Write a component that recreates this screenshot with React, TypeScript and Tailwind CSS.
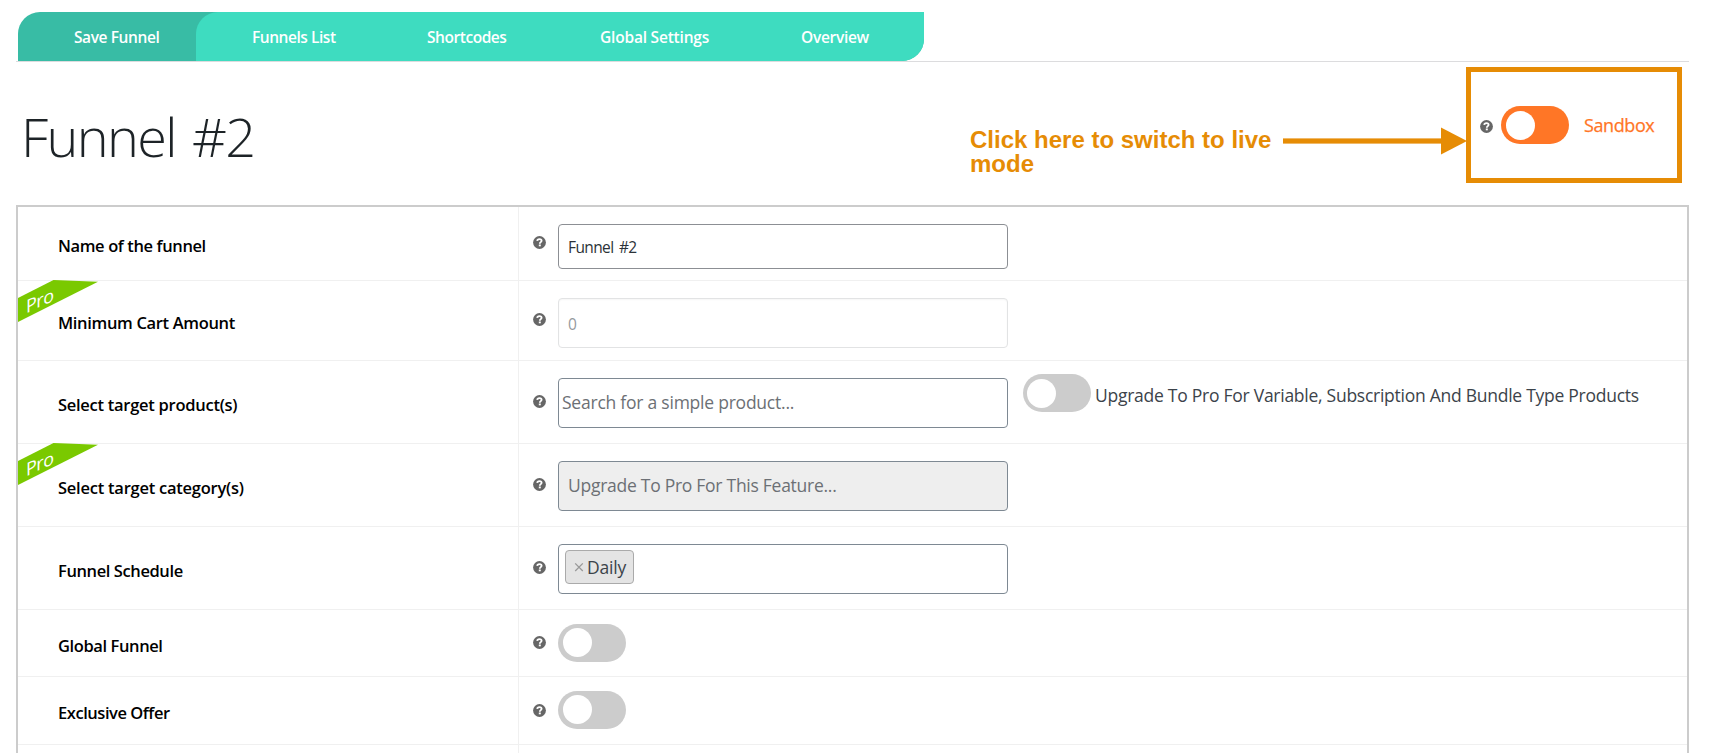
import type { ReactNode } from "react";

function Help({ className }: { className: string }) {
  return (
    <svg viewBox="0 0 13 13" className={`block h-[13px] w-[13px] shrink-0 ${className}`}>
      <circle cx="6.5" cy="6.5" r="6.4" fill="#666" />
      <path
        d="M4.2 4.9C4.3 3.6 5.3 3.1 6.5 3.1S8.6 3.7 8.6 4.8C8.6 6.1 6.8 6.1 6.8 7.7"
        fill="none"
        stroke="#fff"
        strokeWidth="1.8"
      />
      <rect x="5.8" y="8.5" width="2" height="1.8" fill="#fff" />
    </svg>
  );
}

function Toggle({ className, knob }: { className: string; knob: string }) {
  return (
    <div className={`flex h-[38px] w-[68px] shrink-0 rounded-full ${className}`}>
      <div className={`h-[29px] w-[29px] rounded-full bg-white ${knob}`} />
    </div>
  );
}

function Ribbon() {
  return (
    <div className="absolute -top-px left-0 h-[44px] w-[82px]">
      <svg viewBox="0 0 82 44" className="block h-[44px] w-[82px]">
        <polygon points="0,18 35.5,0 80,1.7 0,42" fill="#7ac900" />
      </svg>
      <span className="absolute top-[8px] left-[8px] skew-y-[-25deg] text-[18px] leading-[24px] tracking-[-0.5px] text-white">
        Pro
      </span>
    </div>
  );
}

type RowProps = {
  label: string;
  labelClass: string;
  height: string;
  helpClass: string;
  pro?: boolean;
  children?: ReactNode;
};

function Row({ label, labelClass, height, helpClass, pro, children }: RowProps) {
  return (
    <div className={`relative flex shrink-0 border-b border-[#f0f0f0] ${height}`}>
      {pro && <Ribbon />}
      <div className="w-[501px] shrink-0 border-r border-[#f0f0f0] pl-[40px]">
        <div className={`text-[16.5px] leading-[24px] font-semibold whitespace-nowrap text-black ${labelClass}`}>{label}</div>
      </div>
      <div className="flex flex-1 items-start pl-[14px]">
        <Help className={helpClass} />
        {children}
      </div>
    </div>
  );
}

const field = "ml-[12px] w-[450px] shrink-0 rounded-[4px] border whitespace-nowrap";

export default function App() {
  return (
    <div className="relative h-[753px] w-[1712px] overflow-hidden bg-white pt-[12px] pr-[23px] pl-[16px] font-['Open_Sans',sans-serif]">
      <div className="h-[50px] border-b border-[#dcdcde] pl-[2px]">
        <nav className="flex h-[49px] w-[906px] overflow-hidden rounded-tl-[22px] rounded-br-[22px] bg-[#38bca5] text-[15.5px] leading-[51px] font-semibold whitespace-nowrap text-white">
          <a className="w-[178px] pl-[56px] tracking-[-0.4px]">Save Funnel</a>
          <div className="flex flex-1 rounded-tl-[22px] bg-[#3edcc0]">
            <a className="w-[176px] pl-[56px] tracking-[-0.45px]">Funnels List</a>
            <a className="w-[173px] pl-[55px] tracking-[-0.45px]">Shortcodes</a>
            <a className="w-[200px] pl-[55px] tracking-[-0.2px]">Global Settings</a>
            <a className="pl-[56px] tracking-[-0.3px]">Overview</a>
          </div>
        </nav>
      </div>

      <header className="flex h-[143px] items-start">
        <h1 className="w-[954px] pt-[40px] pl-[5px] text-[54px] leading-[68px] font-light tracking-[-1.65px] [word-spacing:4px] text-[#1d2327]">
          Funnel #2
        </h1>
        <p className="w-[313px] pt-[66px] font-['Liberation_Sans',sans-serif] text-[24px] leading-[24px] font-bold text-[#e68c05]">
          Click here to switch to live
          <br />
          mode
        </p>
        <svg viewBox="0 0 184 28" className="mt-[65px] -mr-[2px] block h-[28px] w-[184px] shrink-0">
          <rect x="0" y="11.4" width="159" height="5.2" fill="#e68c05" />
          <polygon points="158,0.5 184,14 158,27.5" fill="#e68c05" />
        </svg>
        <div className="mt-[5px] ml-px flex h-[116px] w-[216px] shrink-0 items-start border-[5px] border-[#e68c05]">
          <Help className="mt-[48px] ml-[9px]" />
          <Toggle className="mt-[34px] ml-[8px] bg-[#ff7626]" knob="mt-[5px] ml-[5px]" />
          <span className="mt-[40px] ml-[15px] text-[18px] leading-[26px] font-medium tracking-[-0.4px] text-[#ff7626] [-webkit-text-stroke:0.25px_#ff7626]">
            Sandbox
          </span>
        </div>
      </header>

      <main className="flex h-[560px] flex-col border-2 border-[#ccc]">
        <Row label="Name of the funnel" labelClass="mt-[27px] tracking-[-0.38px]" height="h-[74px]" helpClass="mt-[29px]">
          <div className={`${field} mt-[17px] h-[45px] border-[#8c8f94] pl-[9px] text-[15.5px] leading-[45px] tracking-[-0.6px] [word-spacing:2px] text-[#2c3338]`}>
            Funnel #2
          </div>
        </Row>
        <Row label="Minimum Cart Amount" labelClass="mt-[30px] tracking-[-0.34px]" height="h-[80px]" helpClass="mt-[32px]" pro>
          <div className={`${field} mt-[17px] h-[50px] border-[#e2e3e4] pl-[9px] text-[15.5px] leading-[51px] text-[#959a9e] shadow-[inset_0_1px_2px_rgba(0,0,0,0.04)]`}>
            0
          </div>
        </Row>
        <Row label="Select target product(s)" labelClass="mt-[32px] tracking-[-0.27px]" height="h-[83px]" helpClass="mt-[34px]">
          <div className={`${field} mt-[17px] h-[50px] border-[#7e8993] pl-[3px] text-[17.5px] leading-[47px] tracking-[-0.23px] text-[#6c7075]`}>
            Search for a simple product...
          </div>
          <Toggle className="mt-[13px] ml-[15px] bg-[#ccc]" knob="mt-[5px] ml-[4px]" />
          <span className="mt-[21px] ml-[4px] text-[17.5px] leading-[26px] tracking-[-0.26px] whitespace-nowrap text-[#3c434a]">
            Upgrade To Pro For Variable, Subscription And Bundle Type Products
          </span>
        </Row>
        <Row label="Select target category(s)" labelClass="mt-[32px] tracking-[-0.24px]" height="h-[83px]" helpClass="mt-[34px]" pro>
          <div className={`${field} mt-[17px] h-[50px] border-[#7e8993] bg-[#eee] pl-[9px] text-[17.5px] leading-[47px] tracking-[-0.27px] text-[#6c7075]`}>
            Upgrade To Pro For This Feature...
          </div>
        </Row>
        <Row label="Funnel Schedule" labelClass="mt-[32px] tracking-[-0.4px]" height="h-[83px]" helpClass="mt-[34px]">
          <div className={`${field} mt-[17px] flex h-[50px] border-[#7e8993] pt-[5px] pl-[6px]`}>
            <div className="flex h-[34px] w-[69px] items-center rounded-[4px] border border-[#aaa] bg-[#e4e4e4] pl-[8px]">
              <svg viewBox="0 0 10 10" className="h-[10px] w-[10px] shrink-0">
                <path d="M1.2 1.4L8.8 9M8.8 1.4L1.2 9" stroke="#999" strokeWidth="1.3" />
              </svg>
              <span className="ml-[3px] text-[17.5px] leading-[32px] tracking-[-0.2px] text-[#3c434a]">Daily</span>
            </div>
          </div>
        </Row>
        <Row label="Global Funnel" labelClass="mt-[24px] tracking-[-0.4px]" height="h-[67px]" helpClass="mt-[26px]">
          <Toggle className="mt-[14px] ml-[12px] bg-[#ccc]" knob="mt-[4px] ml-[5px]" />
        </Row>
        <Row label="Exclusive Offer" labelClass="mt-[24px] tracking-[-0.45px]" height="h-[68px]" helpClass="mt-[27px]">
          <Toggle className="mt-[14px] ml-[12px] bg-[#ccc]" knob="mt-[4px] ml-[5px]" />
        </Row>
        <div className="h-[20px] w-[501px] shrink-0 border-r border-[#f0f0f0]" />
      </main>
    </div>
  );
}
